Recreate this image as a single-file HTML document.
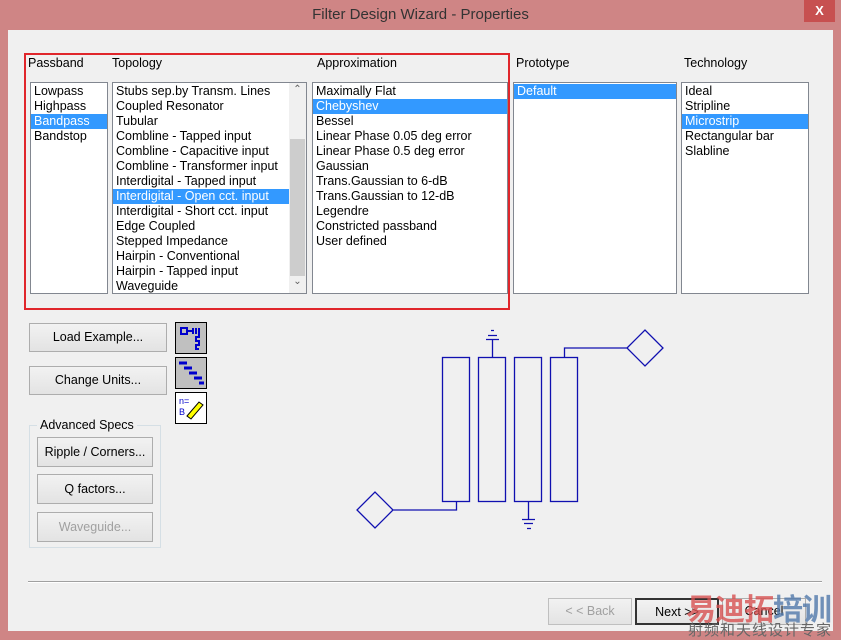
<!DOCTYPE html>
<html><head><style>
*{box-sizing:border-box}
body{margin:0;width:841px;height:639px;background:#cf8585;position:relative;overflow:hidden;font-family:"Liberation Sans","Noto Sans CJK SC",sans-serif;font-size:12.5px;color:#000}
.a{position:absolute}
.title{left:0;top:0;width:841px;height:30px;text-align:center;line-height:30px;font-size:15px;color:#333}
.x{left:804px;top:0;width:31px;height:22px;background:#c75050;color:#fff;text-align:center;line-height:22px;font-size:13px;font-weight:bold}
.client{left:8px;top:30px;width:825px;height:601px;background:#f0f0f0}
.lbl{top:56px}
.list{background:#fff;border:1px solid #828790;overflow:hidden;padding-top:1px}
.list div{height:15px;line-height:15px;padding-left:3px;white-space:nowrap}
.sel{background:#3399ff;color:#fff}
.btn{background:linear-gradient(#f2f2f2,#e3e3e3);border:1px solid #adadad;text-align:center;font-size:12.5px}
.dis{color:#a0a0a0}
</style></head><body>
<div class="a title">Filter Design Wizard - Properties</div>
<div class="a x">X</div>
<div class="a client"></div>
<div class="a" style="left:24px;top:53px;width:486px;height:257px;border:2px solid #e0262b"></div>
<div class="a lbl" style="left:28px">Passband</div>
<div class="a lbl" style="left:112px">Topology</div>
<div class="a lbl" style="left:317px">Approximation</div>
<div class="a lbl" style="left:516px">Prototype</div>
<div class="a lbl" style="left:684px">Technology</div>

<div class="a list" style="left:30px;top:82px;width:78px;height:212px">
<div>Lowpass</div><div>Highpass</div><div class="sel">Bandpass</div><div>Bandstop</div></div>

<div class="a list" style="left:112px;top:82px;width:195px;height:212px">
<div>Stubs sep.by Transm. Lines</div><div>Coupled Resonator</div><div>Tubular</div><div>Combline - Tapped input</div><div>Combline - Capacitive input</div><div>Combline - Transformer input</div><div>Interdigital - Tapped input</div><div class="sel" style="width:176px">Interdigital - Open cct. input</div><div>Interdigital - Short cct. input</div><div>Edge Coupled</div><div>Stepped Impedance</div><div>Hairpin - Conventional</div><div>Hairpin - Tapped input</div><div>Waveguide</div></div>
<div class="a" style="left:289px;top:83px;width:17px;height:210px;background:#f0f0f0"></div>
<div class="a" style="left:290px;top:139px;width:15px;height:137px;background:#cdcdcd"></div>
<div class="a" style="left:289px;top:84px;width:17px;text-align:center;font-size:10px;color:#606060">&#8963;</div>
<div class="a" style="left:289px;top:276px;width:17px;text-align:center;font-size:10px;color:#606060">&#8964;</div>

<div class="a list" style="left:312px;top:82px;width:196px;height:212px">
<div>Maximally Flat</div><div class="sel">Chebyshev</div><div>Bessel</div><div>Linear Phase 0.05 deg error</div><div>Linear Phase 0.5 deg error</div><div>Gaussian</div><div>Trans.Gaussian to 6-dB</div><div>Trans.Gaussian to 12-dB</div><div>Legendre</div><div>Constricted passband</div><div>User defined</div></div>

<div class="a list" style="left:513px;top:82px;width:164px;height:212px">
<div class="sel">Default</div></div>

<div class="a list" style="left:681px;top:82px;width:128px;height:212px">
<div>Ideal</div><div>Stripline</div><div class="sel">Microstrip</div><div>Rectangular bar</div><div>Slabline</div></div>

<div class="a btn" style="left:29px;top:323px;width:138px;height:29px;line-height:27px">Load Example...</div>
<div class="a btn" style="left:29px;top:366px;width:138px;height:29px;line-height:27px">Change Units...</div>
<div class="a" style="left:29px;top:425px;width:132px;height:123px;border:1px solid #d5dfe5"></div>
<div class="a" style="left:37px;top:418px;padding:0 3px;background:#f0f0f0">Advanced Specs</div>
<div class="a btn" style="left:37px;top:437px;width:116px;height:30px;line-height:28px">Ripple / Corners...</div>
<div class="a btn" style="left:37px;top:474px;width:116px;height:30px;line-height:28px">Q factors...</div>
<div class="a btn dis" style="left:37px;top:512px;width:116px;height:30px;line-height:28px">Waveguide...</div>

<svg class="a" style="left:175px;top:322px" width="32" height="102">
<rect x="0.5" y="0.5" width="31" height="31" fill="#c0c0c0" stroke="#000"/>
<path d="M6 6h6v6h-6zM13 9h4M18 6v6M21 6v6M24 6v9h-3v4h3v4h-3v4h3" stroke="#00c" stroke-width="2" fill="none"/>
<rect x="0.5" y="35.5" width="31" height="31" fill="#c0c0c0" stroke="#000"/>
<path d="M4 41h8M9 46h8M14 51h8M19 56h8M24 61h5" stroke="#00c" stroke-width="3"/>
<rect x="0.5" y="70.5" width="31" height="31" fill="#fff" stroke="#000"/>
<text x="4" y="82" font-size="9" fill="#00c" font-family="Liberation Sans">n=</text>
<text x="4" y="93" font-size="9" fill="#00c" font-family="Liberation Sans">B</text>
<path d="M12 94l12-14 4 3-12 14z" fill="#ff0" stroke="#000"/>
</svg>

<svg class="a" style="left:0;top:0" width="841" height="639" fill="none" stroke="#1010b0" stroke-width="1.3">
<rect x="442.5" y="357.5" width="27" height="144"/>
<rect x="478.5" y="357.5" width="27" height="144"/>
<rect x="514.5" y="357.5" width="27" height="144"/>
<rect x="550.5" y="357.5" width="27" height="144"/>
<path d="M492.5 357v-18M486 339.5h13M488 335.5h9M491 330.5h3"/>
<path d="M528.5 501v18M522 519.5h13M524 523.5h9M527 528.5h4"/>
<path d="M564.5 357v-9h63M627 348l18-18 18 18-18 18z"/>
<path d="M456.5 501v9h-63M393 510l-18-18-18 18 18 18z"/>
</svg>

<div class="a" style="left:28px;top:581px;width:794px;height:2px;border-top:1px solid #a0a0a0;border-bottom:1px solid #fff"></div>
<div class="a btn dis" style="left:548px;top:598px;width:84px;height:27px;line-height:25px;border-color:#bfbfbf">&lt; &lt; Back</div>
<div class="a btn" style="left:635px;top:598px;width:84px;height:27px;line-height:25px;border:2px solid #333">Next &gt;&gt;</div>
<div class="a btn" style="left:722px;top:598px;width:84px;height:27px;line-height:25px">Cancel</div>
<div class="a" style="left:686px;top:585px;font-size:30px;font-weight:bold;color:rgba(215,80,80,.8);letter-spacing:-1px">易迪拓<span style="color:rgba(80,120,170,.8)">培训</span></div>
<div class="a" style="left:688px;top:619px;font-size:15px;color:#666;letter-spacing:1px">射频和天线设计专家</div>
</body></html>
